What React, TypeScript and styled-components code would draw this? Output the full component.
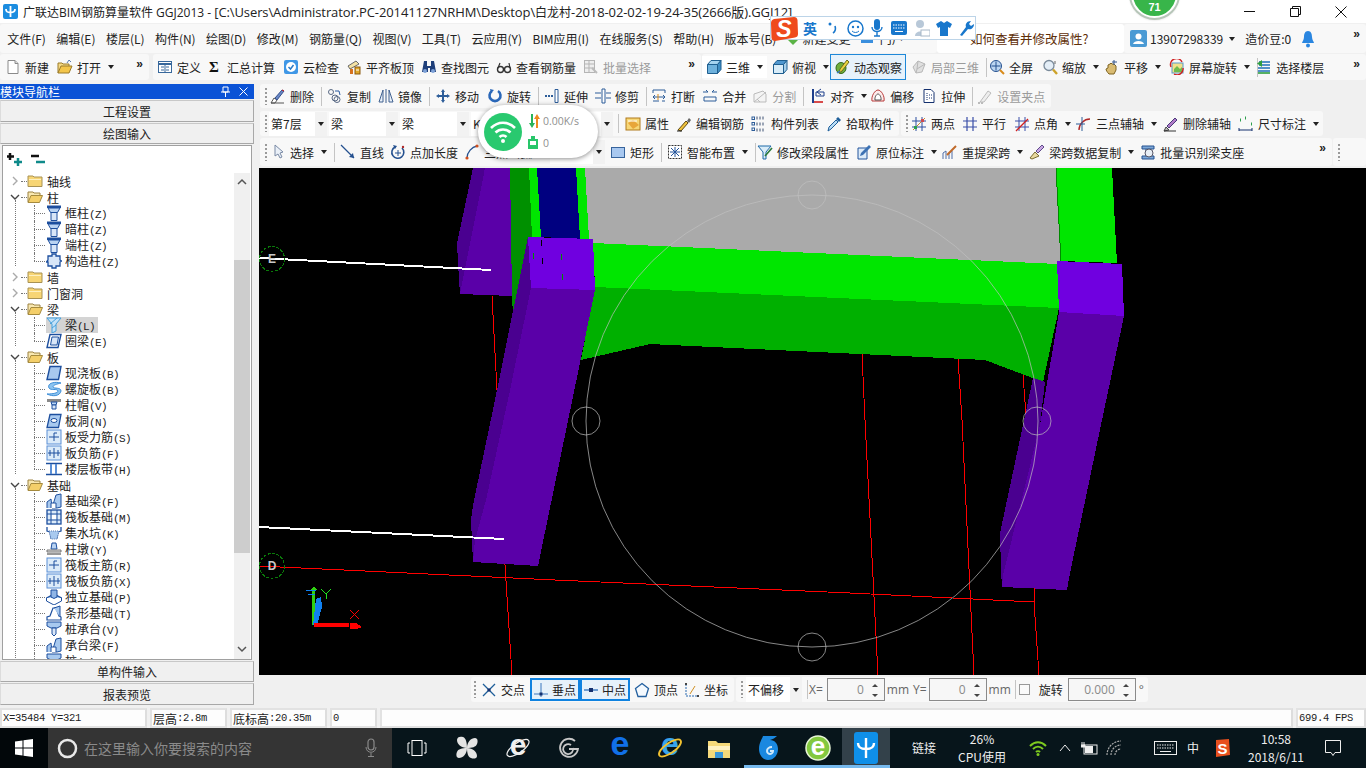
import React from 'react';
import styled, { createGlobalStyle } from 'styled-components';

const Global = createGlobalStyle`
  html, body { margin: 0; padding: 0; overflow: hidden; background: #f0f0f0; }
  body { font-family: "Noto Sans CJK SC", "Liberation Sans", sans-serif; font-size: 12px; color: #222; }
  * { box-sizing: border-box; }
`;

const UI = '"Open Sans", "Noto Sans CJK SC", sans-serif';
const MONO = '"Liberation Mono", "Noto Sans CJK SC", monospace';

/* ---------- page frame ---------- */
const Page = styled.div`
  width: 1366px; height: 768px; position: relative; overflow: hidden;
  display: flex; flex-direction: column; background: #f0f0f0;
`;
const TitleBar = styled.div`
  height: 23px; flex: none; background: #fff; display: flex; align-items: center;
  padding-left: 3px; font-family: ${UI}; font-size: 12px; color: #222; white-space: nowrap;
`;
const TitleText = styled.span` margin-left: 5px; letter-spacing: 0; `;
const TitleWide = styled.span` font-size: 13px; letter-spacing: -0.1px; `;
const WinCtrls = styled.div` margin-left: auto; display: flex; align-items: center; padding-right: 2px; `;
const WinBtn = styled.div`
  width: 46px; height: 22px; display: flex; align-items: center; justify-content: center;
`;
const Row = styled.div<{ $h: number; $pl?: number }>`
  height: ${p => p.$h}px; flex: none; display: flex; align-items: stretch; gap: 0;
  padding-left: ${p => p.$pl ?? 0}px; overflow: hidden; white-space: nowrap;
`;
const Bar = styled.div<{ $w?: number; $ml?: number; $my?: number; $white?: boolean }>`
  ${p => (p.$w ? `width:${p.$w}px;flex:none;` : 'flex:1;min-width:0;')}
  margin-left: ${p => p.$ml ?? 0}px;
  margin-top: ${p => p.$my ?? 0}px; margin-bottom: ${p => p.$my ?? 0}px;
  display: flex; align-items: center; background: ${p => (p.$white ? '#fff' : '#f8f8f8')};
  border-radius: 3px; position: relative;
`;
const Grip = styled.i`
  flex: none; width: 2px; height: 17px; margin: 0 1px 0 5px;
  background: repeating-linear-gradient(to bottom, #9a9a9a 0 2px, transparent 2px 4px);
`;
const More = styled.span`
  margin-left: auto; align-self: flex-start; padding: 3px 6px 0; font: bold 12px "Liberation Sans", sans-serif; color: #222;
`;
const Sep = styled.i`
  flex: none; width: 1px; height: 19px; margin: 0 2px 0 3px; background: #c4c4c4;
`;
const Tool = styled.div<{ $off?: boolean; $caret?: boolean; $ml?: number; $hl?: boolean; $snap?: boolean; $wb?: boolean }>`
  flex: none; display: inline-flex; align-items: center; gap: 4px; height: 100%;
  padding: 0 ${p => (p.$caret ? 1 : 4)}px 0 4px; margin-left: ${p => p.$ml ?? 0}px;
  color: ${p => (p.$off ? '#9b9b9b' : '#222')};
  ${p => p.$wb ? 'background:#fff;height:22px;' : ''}
  ${p => p.$hl ? 'height:26px;border:1px solid #1e88d8;background:#e7f2fb;padding:0 3px;' : ''}
  ${p => p.$snap ? 'height:23px;border:2px solid #0f82e0;background:#e6f1fa;padding:0 2px 0 1px;gap:3px;' : ''}
`;
const CaretBox = styled.span`
  flex: none; width: 12px; height: 100%; display: flex; align-items: center; justify-content: center;
  &::before { content: ''; border: 3px solid transparent; border-top: 4px solid #222; border-bottom: 0; }
`;
const SelectBox = styled.div<{ $w: number; $ml?: number }>`
  flex: none; width: ${p => p.$w}px; height: 24px; margin-left: ${p => p.$ml ?? 0}px; background: #fff;
  display: flex; align-items: center; padding-left: 2px; font-size: 12px; color: #222;
`;
const SelectArrow = styled.span`
  margin-left: auto; width: 12px; height: 100%; background: #f2f2f2; display: flex; align-items: center; justify-content: center;
  &::before { content: ''; border: 3px solid transparent; border-top: 4px solid #222; border-bottom: 0; }
`;

/* ---------- body ---------- */
const Body = styled.div` flex: 1; min-height: 0; display: flex; `;
const Side = styled.aside` width: 254px; flex: none; display: flex; flex-direction: column; `;
const SideHead = styled.div`
  height: 15px; flex: none; margin-bottom: 1px; background: #0a52d6; color: #fff; display: flex; align-items: center;
  font-size: 12px; line-height: 15px;
`;
const SideHeadIcons = styled.div` margin-left: auto; display: flex; gap: 9px; padding-right: 6px; align-items: center; `;
const SideBtn = styled.div<{ $h: number }>`
  height: ${p => p.$h}px; flex: none; margin-bottom: 1px; border: 1px solid #a8a8a8; border-top-color: #c8c8c8; border-left-color: #dcdcdc;
  background: #f0f0f0; display: flex; align-items: center; justify-content: center; font-size: 12px; color: #222;
`;
const Panel = styled.div`
  height: 515px; flex: none; margin: 0 2px 1px 2px; border: 1px solid #a0a0a0; background: #fff;
  display: flex; flex-direction: column;
`;
const PanelTools = styled.div` height: 27px; flex: none; padding: 4px 0 0 4px; `;
const TreeWrap = styled.div` flex: 1; min-height: 0; display: flex; `;
const TreeList = styled.div` flex: 1; min-width: 0; overflow: hidden; `;
const Group = styled.div` position: relative; `;
const GroupKids = styled.div`
  position: relative;
  &::before { content: ''; position: absolute; left: 12px; top: -5px; bottom: 3px; border-left: 1px dotted #777; }
`;
const GroupRow = styled.div`
  height: 16px; display: flex; align-items: center; padding-left: 7px; position: relative; font-size: 12px; color: #222;
`;
const Chevron = styled.svg` width: 10px; height: 10px; flex: none; `;
const Dots = styled.i` width: 6px; flex: none; height: 0; margin: 0 0 0 1px; border-top: 1px dotted #777; `;
const KidRow = styled.div<{ $last?: boolean }>`
  height: 16px; display: flex; align-items: center; padding-left: 43px; position: relative; font-size: 12px; color: #222;
  &::before { content: ''; position: absolute; left: 31px; top: 8px; width: 11px; border-top: 1px dotted #777; }
  &::after { content: ''; position: absolute; left: 31px; top: 0; height: ${p => (p.$last ? 8 : 16)}px; border-left: 1px dotted #777; }
`;
const KidLabel = styled.span<{ $sel?: boolean }>`
  height: 16px; line-height: 16px; padding: 0 3px 0 3px; background: ${p => (p.$sel ? '#d4d4d4' : 'transparent')};
`;
const KidIcon = styled.span<{ $sel?: boolean }>`
  width: 16px; height: 16px; flex: none; display: block; background: ${p => (p.$sel ? '#d4d4d4' : 'transparent')};
`;
const Lat = styled.span` font-family: ${MONO}; font-size: 11px; letter-spacing: -0.6px; `;
const Track = styled.div`
  width: 16px; flex: none; background: #f0f0f0; display: flex; flex-direction: column; margin-right: 1px;
`;
const TrackEnd = styled.div` height: 17px; flex: none; display: flex; align-items: center; justify-content: center; `;
const TrackGap = styled.div<{ $h: number }>` height: ${p => p.$h}px; flex: none; `;
const Thumb = styled.div` height: 293px; flex: none; background: #cdcdcd; `;

const Main = styled.main` flex: 1; min-width: 0; display: flex; flex-direction: column; `;
const Canvas = styled.div`
  height: 507px; flex: none; margin-left: 5px; background: #000; overflow: hidden;
  svg { display: block; }
`;
const Field = styled.div<{ $w: number }>`
  width: ${p => p.$w}px; height: 23px; flex: none; border: 1px solid #8a8a8a; background: #f7f7f7; position: relative;
  display: flex; align-items: center; justify-content: flex-end; padding-right: 20px; color: #8a8a8a; font-family: ${UI};
`;
const Spin = styled.i`
  position: absolute; right: 6px; top: 5px; width: 6px; height: 13px;
  &::before { content: ''; position: absolute; top: 0; left: 0; border: 3px solid transparent; border-bottom: 3px solid #444; border-top: 0; }
  &::after { content: ''; position: absolute; bottom: 0; left: 0; border: 3px solid transparent; border-top: 3px solid #444; border-bottom: 0; }
`;
const Unit = styled.span<{ $ml?: number }>` margin-left: ${p => p.$ml ?? 2}px; color: #666; font-family: ${UI}; font-size: 12px; `;
const Check = styled.i` width: 11px; height: 11px; flex: none; margin-left: 4px; border: 1px solid #999; background: #fafafa; `;

const Status = styled.div` height: 23px; flex: none; display: flex; padding-top: 3px; gap: 3px; `;
const Cell = styled.div<{ $w?: number }>`
  ${p => (p.$w ? `width:${p.$w}px;flex:none;` : 'flex:1;')}
  height: 20px; border: 2px solid #e2e2e2; border-right-color: #ddd; background: #fdfdfd; display: flex; align-items: center; padding-left: 1px;
  font-family: ${MONO}; font-size: 10.5px; letter-spacing: -0.3px; color: #222; overflow: hidden; white-space: nowrap;
`;
const CellCjk = styled.span` font-family: "Noto Sans CJK SC", sans-serif; font-size: 12px; letter-spacing: 0; `;

/* ---------- taskbar ---------- */
const Taskbar = styled.footer` height: 40px; flex: none; background: #07151b; display: flex; align-items: stretch; color: #eee; `;
const Start = styled.div` width: 48px; flex: none; background: #02070a; display: flex; align-items: center; justify-content: center; `;
const Search = styled.div`
  width: 344px; flex: none; background: #343434; display: flex; align-items: center; padding-left: 9px; color: #8a8a8a; font-size: 14px; white-space: nowrap;
`;
const SearchText = styled.span` margin-left: 6px; `;
const SearchMic = styled.span` margin-left: auto; margin-right: 15px; display: flex; `;
const TaskItem = styled.div<{ $w: number; $on?: boolean; $line?: boolean }>`
  width: ${p => p.$w}px; flex: none; display: flex; align-items: center; justify-content: center; position: relative;
  background: ${p => (p.$on ? '#33414a' : 'transparent')};
  ${p => p.$line ? `box-shadow: inset 0 -3px 0 #76b9ed;` : ''}
`;
const TrayText = styled.div`
  display: flex; flex-direction: column; align-items: center; justify-content: center; font-size: 12px; line-height: 18px; color: #eee; white-space: nowrap;
`;
const Clock = styled(TrayText)` font-size: 12px; line-height: 18px; position: relative; `;

/* ---------- overlays ---------- */
const ImeBar = styled.div`
  position: absolute; left: 770px; top: 16px; width: 206px; height: 24px; background: #fff; border: 1px solid #bcd4e8;
  display: flex; align-items: center; z-index: 5; color: #1877cc;
`;
const ImeLogo = styled.div`
  position: absolute; left: -1px; top: 0; width: 28px; height: 24px;
`;
const ImeSlot = styled.span<{ $w: number; $ml?: number }>`
  width: ${p => p.$w}px; margin-left: ${p => p.$ml ?? 0}px; flex: none; display: flex; align-items: center; justify-content: center; font-weight: 700; font-size: 14px;
`;
const NetWidget = styled.div`
  position: absolute; left: 478px; top: 105px; width: 120px; height: 53px; border-radius: 27px; background: #fff;
  box-shadow: 0 1px 5px rgba(0,0,0,.45); display: flex; align-items: center; padding-left: 6px; z-index: 4;
  color: #8f8f8f; font-family: ${UI}; font-size: 10.5px;
`;
const NetBall = styled.div`
  width: 38px; height: 38px; border-radius: 50%; background: #29c96f; flex: none; display: flex; align-items: center; justify-content: center;
`;
const NetInfo = styled.div` margin-left: 6px; display: grid; grid-template-columns: 14px auto; row-gap: 8px; align-items: center; column-gap: 1px; `;
const Ball = styled.div`
  position: absolute; left: 1131px; top: -29px; width: 47px; height: 47px; border-radius: 50%; background: #38b54a; border: 2px solid #fff;
  box-shadow: 0 0 0 2px #b7c6b9, 0 1px 3px rgba(0,0,0,.4); z-index: 6; color: #fff; font: bold 11px "Liberation Sans", sans-serif;
  display: flex; align-items: flex-end; justify-content: center; padding-bottom: 3px;
`;
const Hint = styled.span` color: #5e2e08; font-size: 12.5px; font-family: "Noto Sans CJK SC", sans-serif; padding-left: 33px; `;

/* ---------- icons ---------- */
const D = '#1d4f9e', L = '#b9d3f2', M = '#5b8fd6', R = '#d02020', K = '#333', N = '#14306e';
const A: Record<string, React.ReactNode> = {
  new: <><path d="M3 1.5h7l3 3v10H3z" fill="#fff" stroke="#8a8a8a" /><path d="M10 1.5v3h3" fill="#ddd" stroke="#8a8a8a" /></>,
  open: <><path d="M1 14V4h4l1 1h6v2" fill="#f6da85" stroke="#9a7a2a" /><path d="M1 14l3-7h11l-3 7z" fill="#f3c54a" stroke="#9a7a2a" /><path d="M10 4l2-3 2 2" fill="none" stroke="#5a7ab0" /></>,
  define: <><rect x="1.5" y="2.5" width="13" height="11" fill="#fff" stroke="#38689c" /><path d="M2 5h12" stroke="#38689c" strokeWidth="2" /><path d="M4 8h3M4 11h3M9 8h3M9 11h3M8 6v7" stroke="#38689c" /></>,
  sigma: <text x="2" y="13" fontFamily="Liberation Serif" fontWeight="700" fontSize="15" fill="#111">Σ</text>,
  cloud: <><rect x="1" y="1" width="14" height="14" rx="2" fill="#3f97e6" /><circle cx="8" cy="8" r="5" fill="#fff" /><path d="M5.5 8l2 2 3-4" fill="none" stroke="#2b7bc8" strokeWidth="1.5" /></>,
  level: <><path d="M2 7l8-5 3 3-9 5z" fill="#f4e2a4" stroke="#6a6a6a" /><rect x="4" y="10" width="3" height="5" fill="#d8721e" /><rect x="9" y="8" width="5" height="7" fill="#e0a82a" stroke="#8a5a10" /><path d="M10 11h3" stroke="#fff" /></>,
  find: <><path d="M3 2h3v5h4V2h3l2 11H9V9H7v4H1z" fill="#1f3f7a" /><circle cx="4" cy="12" r="2" fill="#7ea2d8" /><circle cx="12" cy="12" r="2" fill="#7ea2d8" /></>,
  glasses: <><circle cx="4.5" cy="10.5" r="3" fill="none" stroke={K} strokeWidth="1.4" /><circle cx="11.5" cy="10.5" r="3" fill="none" stroke={K} strokeWidth="1.4" /><path d="M7.5 10h1M2 9l2-5M14 9l-1-5" stroke={K} strokeWidth="1.2" /></>,
  batch: <><rect x="1.5" y="1.5" width="10" height="12" fill="#eee" stroke="#b5b5b5" /><path d="M1.5 5h10M1.5 9h10M6 1.5v12" stroke="#b5b5b5" /><path d="M9 9l5 5" stroke="#bbb" strokeWidth="2" /></>,
  cube: <><path d="M1.5 5.5h10v9h-10z" fill="#6fb2dd" stroke="#1f5f90" /><path d="M1.5 5.5L5 1.5h10l-3.5 4z" fill="#a5d3ef" stroke="#1f5f90" /><path d="M11.5 5.5L15 1.5v9l-3.5 4z" fill="#3f8ec4" stroke="#1f5f90" /></>,
  top: <><path d="M1.5 5.5h10v9h-10z" fill="#d8ecf8" stroke="#1f5f90" /><path d="M1.5 5.5L5 1.5h10l-3.5 4z" fill="#4f97cf" stroke="#1f5f90" /><path d="M11.5 5.5L15 1.5v9l-3.5 4z" fill="#a8d0ea" stroke="#1f5f90" /></>,
  orbit: <><ellipse cx="7" cy="9" rx="5" ry="5.5" fill="#6fae3c" stroke="#35691a" /><path d="M13 1L6 10l-1 4 3-2 7-9z" fill="#e9d23e" stroke="#6d6a1a" /><path d="M3 14l3-2" stroke="#3a7fc8" strokeWidth="1.5" /></>,
  local: <><path d="M2 8l5-6 7 3-3 8-6 1z" fill="#e0e0e0" stroke="#b8b8b8" /><path d="M7 2l-1 8 8-5M6 10l-1 4" stroke="#b8b8b8" fill="none" /></>,
  full: <><circle cx="7" cy="7" r="5.5" fill="#bcd6f2" stroke="#24508f" /><path d="M7 2.5v9M2.5 7h9" stroke="#24508f" /><path d="M11 11l4 4" stroke="#d88a1a" strokeWidth="2" /></>,
  zoom: <><circle cx="7" cy="6.5" r="5" fill="#e4eef7" stroke="#7a8a9a" strokeWidth="1.3" /><path d="M11 10.5l4 4.5" stroke="#cda32a" strokeWidth="2.4" /><path d="M13 2v3" stroke="#666" /></>,
  pan: <><path d="M5 15c-2-2-3-4-3-5l2-1V6l2-1 1-1 1 1h2l2 2v4l-2 4z" fill="#d9bb72" stroke="#7f6422" /><path d="M10 1v5M8 3h5" stroke="#33558c" /></>,
  srot: <><rect x="3" y="4" width="11" height="10" fill="#f1e08a" stroke="#5a9ac8" /><path d="M5 10l3-3 3 3 2-2v5H5z" fill="#6fbb4e" /><path d="M2 8a6 6 0 0 1 11-5M14 9a6 6 0 0 1-9 6" fill="none" stroke={R} strokeWidth="1.4" /></>,
  floor: <><path d="M3 3h11M3 6h11M2 9h12M2 12h12" stroke="#1f6fb8" strokeWidth="1.6" /><path d="M6 1L1 4.5 6 8z" fill="#2f9f3f" /><path d="M2 14h12" stroke="#2f9f3f" strokeWidth="1.6" /></>,
  del: <><path d="M1 15l3-5 3 2-2 3z" fill="#fff" stroke="#555" /><path d="M5 10l7-8 2 1-7 9z" fill="#6a88c6" stroke="#34508c" /><path d="M1 15h13" stroke="#555" /><path d="M12 2l2 1" stroke={R} /></>,
  copy: <><circle cx="4" cy="4" r="2.5" fill="none" stroke="#5a6a85" /><circle cx="10" cy="11.5" r="3" fill="none" stroke="#5a6a85" /><circle cx="8" cy="10" r="3" fill="none" stroke="#5a6a85" /><path d="M8 3l4 0 1 4" fill="none" stroke="#2a5aa0" /></>,
  mirror: <><path d="M1 14L5 2v12z" fill="#eaf1fa" stroke="#40618f" /><path d="M15 14L11 2v12z" fill="#eaf1fa" stroke="#40618f" /><path d="M8 1v14" stroke="#40618f" /></>,
  move: <path d="M8 1l2 3H9v3h3V6l3 2-3 2V9H9v3h1l-2 3-2-3h1V9H4v1L1 8l3-2v1h3V4H6z" fill="#2d5d99" />,
  rot: <><path d="M11 3a5.5 5.5 0 1 1-6 0" fill="none" stroke="#2a67b8" strokeWidth="2.6" /><path d="M3 1l4 1-3 3z" fill="#2a67b8" /></>,
  extend: <><path d="M1 8h8M1 8" stroke="#2d5d99" strokeDasharray="2 1" strokeWidth="2" /><path d="M11 1.5v13h3v-13z" fill="#fff" stroke="#2d5d99" /></>,
  trim: <><path d="M7 1h3v14H7z" fill="#fff" stroke="#2d5d99" /><path d="M0 5h6M0 10h6M11 5h5M11 10h5" stroke="#2d5d99" strokeWidth="1.2" /></>,
  brk: <><path d="M2 2h12M2 13h6M11 13h3M2 2v3M14 2v3" stroke="#2d5d99" fill="none" /><path d="M4 7l-2 2 2 2M12 7l2 2-2 2M2 9h12" stroke="#2d5d99" fill="none" /><path d="M7 6v6" stroke="#d88a1a" /></>,
  merge: <><path d="M2 13h12M2 9h12M2 9v4M14 9v4" fill="none" stroke="#2d5d99" /><path d="M1 4h5l-2-2M15 4h-5l2-2" fill="none" stroke="#2d5d99" /></>,
  split: <><path d="M2 14V6l9-3 3 3v8z" fill="#f4f4f4" stroke="#bbb" /><path d="M2 14L14 4M5 11l3 3" stroke="#bbb" /></>,
  align: <><path d="M3 1v14" stroke="#1d3f8c" strokeWidth="2" /><path d="M4 14h9" stroke={R} strokeWidth="1.6" /><path d="M6 4h8v4H6zM11 1l-4 3 4 3" fill="none" stroke="#1d3f8c" /></>,
  offset: <><path d="M2 13c-1-5 3-11 6-11s7 6 6 11z" fill="#fdeaea" stroke="#b83a3a" /><path d="M5 12c-.5-3 1.5-6 3-6s3.5 3 3 6z" fill="#fff" stroke="#555" /></>,
  stretch: <><path d="M3 1.5h7l3 3v10H3z" fill="#fff" stroke={N} /><path d="M8 7h3M8 10h3M6 5v7" stroke={N} strokeDasharray="1 1" /></>,
  gripp: <><path d="M3 14L11 3l3 2-7 9z" fill="#eee" stroke="#bbb" /><path d="M1 15h5" stroke="#bbb" strokeWidth="2" strokeDasharray="2 1" /></>,
  prop: <><rect x="1" y="2" width="14" height="12" fill="#f7d777" stroke="#b07a1c" /><path d="M3 7l5-3 6 5-6 4z" fill="#e8a63a" /><path d="M3 5h9" stroke="#fff" /></>,
  rebar: <><path d="M2 14L10 5l2 2-7 8z" fill="#f0c23c" stroke="#5f4a12" /><path d="M11 5l2-3 2 2-2 3z" fill="#666" /><path d="M1 15h5" stroke="#222" /></>,
  list: <><path d="M5 2h9M5 8h9M5 14h9" stroke="#9aa4b5" strokeWidth="3" strokeDasharray="2 1" /><rect x="1" y="1" width="2.5" height="2.5" fill="none" stroke="#2d5d99" /><rect x="1" y="6.5" width="2.5" height="2.5" fill="none" stroke="#2d5d99" /><rect x="1" y="12" width="2.5" height="2.5" fill="none" stroke="#2d5d99" /></>,
  pick: <><path d="M2 15l1-4 7-7 2 2-7 7z" fill="#b9dcf5" stroke="#1f5f9a" /><path d="M10 3l2-2 3 3-2 2z" fill="#1f5f9a" /></>,
  twop: <><path d="M5 1v14M11 1v14M1 5h14M1 11h14" stroke="#2d4fa0" /><path d="M2 14L14 2" stroke="#ca8a28" /><rect x="3" y="10" width="3" height="3" fill="#2c9f4c" /><rect x="10" y="3" width="3" height="3" fill="#d24a4a" /></>,
  para: <path d="M5 1v14M11 1v14M1 5h14M1 11h14" stroke="#3a4fa8" strokeWidth="1.2" />,
  angle: <><path d="M5 1v14M11 1v14M1 5h14M1 11h14" stroke="#3a4fa8" /><path d="M2 15L14 3" stroke={R} strokeWidth="1.3" /></>,
  arc3: <><path d="M3 14c0-6 5-11 11-11" fill="none" stroke="#b02828" strokeWidth="1.4" /><path d="M0 8h9M6 1v14" stroke="#2d5d99" /></>,
  delax: <><path d="M1 15l2-4 3 3z" fill="#bdbdbd" stroke="#444" /><path d="M4 10l8-8 2 2-8 8z" fill="#b07ac8" stroke="#4a3a7a" /><path d="M1 15h12" stroke={K} /></>,
  dim: <><path d="M1 12v3M14 12v3M1 14h13" stroke="#14306e" /><path d="M2 4h1M7 2h1M13 8h1" stroke="#2c9f4c" strokeWidth="3" /></>,
  arrow: <path d="M5 1l0 11 3-2 2 4 2-1-2-4 3-1z" fill="#eaf0f8" stroke="#7a8aa5" />,
  line: <><path d="M1 1l13 13" stroke="#24508f" strokeWidth="1.3" /><path d="M14 14l-5-1 4-4z" fill="#24508f" /></>,
  addlen: <><path d="M5 3a6 6 0 1 0 7 1" fill="none" stroke="#24508f" strokeWidth="1.6" /><path d="M8 6v6M5 9h6" stroke="#24508f" /><path d="M3 1l4 1-2 3z" fill="#24508f" /><circle cx="13" cy="3" r="1.2" fill="#b02828" /></>,
  arcT: <><path d="M3 14C3 8 8 3 13 2" fill="none" stroke="#24508f" strokeWidth="1.3" /><circle cx="3" cy="14" r="1.6" fill="#d2501e" /><circle cx="13" cy="2" r="1.6" fill="#d2501e" /></>,
  rect: <rect x="1.5" y="3.5" width="13" height="10" fill="#a8c8f0" stroke="#36639c" />,
  smart: <><rect x="1.5" y="1.5" width="13" height="13" fill="#fff" stroke="#333" strokeDasharray="2 1" /><path d="M8 3v10M3 8h10M4 4l8 8M12 4l-8 8" stroke="#23549c" strokeWidth="1" /></>,
  modseg: <><path d="M1 2h13l-5 6v7H6V8z" fill="#d9ecf8" stroke="#1f6aa8" /><path d="M8 12L15 4" stroke="#2a7a3c" strokeWidth="1.6" /></>,
  orig: <><path d="M2 4h9v11H2z" fill="#dcebf9" stroke="#23549c" /><path d="M5 9l8-8 2 2-8 8-3 1z" fill="#3d72b4" /></>,
  relift: <><path d="M1 15V9l3-2v8M7 15V9l3-2v8" fill="none" stroke="#4f6fa8" /><path d="M5 11l9-9" stroke="#c06a2a" strokeWidth="2" /></>,
  spancp: <><path d="M1 14l5-6 4 4-7 3z" fill="#e8d9a0" stroke="#7a6a30" /><path d="M7 7l6-6 2 2-6 6z" fill="#c9a7e3" stroke="#5f4a8a" /></>,
  batchid: <><path d="M2 2h12v3H2zM2 12h12v3H2z" fill="#7da8d8" stroke="#24508f" /><path d="M6 5v7M10 5v7" stroke="#24508f" /><circle cx="9" cy="9" r="4" fill="#e8eef5" stroke="#556" /></>,
  inter: <><path d="M2 2l12 12M14 2L2 14" stroke="#1f5f9a" strokeWidth="1.3" /><rect x="6.5" y="6.5" width="3" height="3" fill="#14306e" /></>,
  perp: <><path d="M8 1v14M1 12h14" stroke="#3a77bd" /><rect x="6.5" y="10.5" width="3" height="3" fill="#14306e" /></>,
  mid: <><path d="M1 8h14" stroke="#3a77bd" strokeWidth="1.4" /><rect x="6" y="6" width="4" height="4" fill="#14306e" /></>,
  vertex: <path d="M8 1.5l6.5 5-2.5 8H4l-2.5-8z" fill="#f4f9fe" stroke="#24609f" strokeWidth="1.3" />,
  coord: <><path d="M2 2v12h12" stroke="#2b6ab0" strokeDasharray="2 1" fill="none" /><path d="M6 12L11 4" stroke="#d09022" /><rect x="1" y="1" width="2" height="2" fill="#444" /><rect x="13" y="13" width="2" height="2" fill="#444" /></>,
  /* tree */
  col: <><path d="M1 .5h14V3H1z" fill={D} /><path d="M2 3h12l-2.5 4.5h-7z" fill={L} stroke={D} /><path d="M5 7.5h6v8H5z" fill="#d8e6f8" stroke={D} /></>,
  gz: <path d="M6 1h4v2h4v4l1.5 1L14 9v4h-4v2H6v-2H2V9H.5L2 7V3h4z" fill="#d8e6f8" stroke={D} strokeWidth="1.3" />,
  beam: <><path d="M1 1h14l-5 6v7l-4 2V7z" fill="#c4e2f8" stroke="#45a0dc" /><path d="M4 7l7-6M6 11l4-3" stroke="#45a0dc" /></>,
  ring: <><path d="M4 1.5h11L12 14.5H1z" fill="#fff" stroke={D} strokeWidth="1.4" /><path d="M6 4h6.5L11 12H4.5z" fill="#d8e6f8" stroke={D} /></>,
  slab: <path d="M4 1.5h11L12.5 14.5H1z" fill="#a8c9ef" stroke={D} strokeWidth="1.4" />,
  spiral: <path d="M15 2C7 0 1 3 3 7c2 3 8 0 9 3 0 2-5 3-11 3 6 3 13 2 14-3 0-4-7-2-8-4 0-2 4-3 8-4z" fill="#8cc4f0" stroke="#3f8fd8" />,
  cap: <><path d="M1 2h14v3H1z" fill="#8a8a8a" /><path d="M5 5h6l-1 3H6z" fill={L} stroke={D} /><path d="M6 8h4v4H6z" fill="#d8e6f8" stroke={D} /></>,
  hole: <><path d="M4 1.5h11L12.5 14.5H1z" fill="#a8c9ef" stroke={D} strokeWidth="1.3" /><ellipse cx="8" cy="7.5" rx="3" ry="2" fill="#fff" stroke={D} /></>,
  sq: <><rect x="1" y="1" width="14" height="14" fill="#dcebf9" stroke={M} /><path d="M8 4v8M3 8h10" stroke={D} /><path d="M8 4h3" stroke={D} /></>,
  sqn: <><rect x="1" y="1" width="14" height="14" fill="#dcebf9" stroke={M} /><path d="M8 3v10M2 8h12M4 5v6M12 5v6" stroke={D} /></>,
  band: <><path d="M0 2.5h16M0 13.5h16" stroke={D} strokeWidth="1.6" /><path d="M5 3v10M10 3v10" stroke={M} strokeWidth="2" /></>,
  fbeam: <><path d="M1 15V9l4-3 1 9M6 15l4-13 5-1v13l-4 1z" fill="#a8c9ef" stroke={D} /><path d="M5 15V10h5v5" fill="#fff" stroke={D} /></>,
  raft: <><rect x="1" y="1" width="14" height="14" fill="#dcebf9" stroke={D} strokeWidth="1.3" /><path d="M5 1v14M11 1v14M1 5h14M1 11h14" stroke={D} /><rect x="6" y="6" width="4" height="4" fill="#fff" /></>,
  pit: <><path d="M1 2v4l3 1 1 6h6l1-6 3-1V2" fill="none" stroke={D} strokeWidth="1.3" /><path d="M3 6h10l-2 8H5z" fill="#a8c9ef" strokeDasharray="1 1" stroke="#5a7ab0" /></>,
  pier: <><path d="M6 2h4l1 6H5z" fill={L} stroke={D} /><path d="M1 9h14v2H1z" fill="#e0e0e0" stroke="#777" /><path d="M1 13h14" stroke="#777" strokeWidth="1.5" /></>,
  indep: <><path d="M.5 9L8 5l7.5 4L8 14z" fill="#a8c9ef" stroke={D} strokeWidth="1.2" /><path d="M.5 9v3L8 16l7.5-4V9" fill="#fff" stroke={D} /><path d="M5 8V1h6v7l-3 1.5z" fill="#8fb5e6" stroke={D} /></>,
  strip: <><path d="M1 15v-3l3-1 3-8h3l3 8 2 1v3z" fill="#fff" stroke={D} strokeWidth="1.2" /><path d="M8 3l6-2v11" fill="#a8c9ef" stroke={D} /></>,
  pile: <><path d="M1 1h14v4L11 7H5L1 5z" fill="#a8c9ef" stroke={D} /><path d="M6 7h4v6l-2 2-2-2z" fill="#d8e6f8" stroke={D} /></>,
};
const I = ({ n, s = 16 }: { n: string; s?: number }) => (
  <svg width={s} height={s} viewBox="0 0 16 16" style={{ flex: 'none', display: 'block' }}>{A[n]}</svg>
);

type T = { i?: string; t?: string; c?: boolean; off?: boolean; hl?: boolean; sep?: boolean; ml?: number; snap?: boolean; wb?: boolean };
const Tools = ({ list }: { list: T[] }) => (
  <>
    {list.map((x, k) =>
      x.sep ? <Sep key={k} /> : (
        <Tool key={k} $off={x.off} $caret={x.c} $ml={x.ml} $hl={x.hl} $snap={x.snap} $wb={x.wb}>
          <I n={x.i!} />
          <span>{x.t}</span>
          {x.c && <CaretBox />}
        </Tool>
      ),
    )}
  </>
);
const Select = ({ w, t, ml }: { w: number; t?: string; ml?: number }) => (
  <SelectBox $w={w} $ml={ml}><span>{t}</span><SelectArrow /></SelectBox>
);

const menu = ['文件(F)', '编辑(E)', '楼层(L)', '构件(N)', '绘图(D)', '修改(M)', '钢筋量(Q)', '视图(V)', '工具(T)', '云应用(Y)', 'BIM应用(I)', '在线服务(S)', '帮助(H)', '版本号(B)'];
const MenuItem = styled.span` padding: 0 5.2px; font-size: 12px; `;
const IconBox = styled.span<{ $ml?: number }>` margin-left: ${p => p.$ml ?? 0}px; display: flex; align-items: center; `;
const BarText = styled.span<{ $ml?: number }>` margin-left: ${p => p.$ml ?? 0}px; `;

const tree: { n: string; open?: boolean; kids?: [string, string, string, boolean?][] }[] = [
  { n: '轴线' },
  { n: '柱', open: true, kids: [['col', '框柱', '(Z)'], ['col', '暗柱', '(Z)'], ['col', '端柱', '(Z)'], ['gz', '构造柱', '(Z)']] },
  { n: '墙' },
  { n: '门窗洞' },
  { n: '梁', open: true, kids: [['beam', '梁', '(L)', true], ['ring', '圈梁', '(E)']] },
  { n: '板', open: true, kids: [['slab', '现浇板', '(B)'], ['spiral', '螺旋板', '(B)'], ['cap', '柱帽', '(V)'], ['hole', '板洞', '(N)'], ['sq', '板受力筋', '(S)'], ['sqn', '板负筋', '(F)'], ['band', '楼层板带', '(H)']] },
  { n: '基础', open: true, kids: [['fbeam', '基础梁', '(F)'], ['raft', '筏板基础', '(M)'], ['pit', '集水坑', '(K)'], ['pier', '柱墩', '(Y)'], ['sq', '筏板主筋', '(R)'], ['sqn', '筏板负筋', '(X)'], ['indep', '独立基础', '(P)'], ['strip', '条形基础', '(T)'], ['pile', '桩承台', '(V)'], ['fbeam', '承台梁', '(F)'], ['pile', '桩', '(U)']] },
];

const Folder = ({ open }: { open?: boolean }) => (
  <svg width="16" height="14" viewBox="0 0 16 14" style={{ flex: 'none', margin: '0 4px 0 0' }}>
    {open
      ? <><path d="M1 12V2h5l1 1h6v3" fill="#f8e7b0" stroke="#9c8342" /><path d="M1 12.5l3-7h11.5l-3 7z" fill="#f4cf6a" stroke="#a58a3e" /></>
      : <><path d="M1 3V2h5l1 1h8v9.5H1z" fill="#f7d574" stroke="#a89254" /><path d="M2 5h12v1H2z" fill="#fdf0c0" /></>}
  </svg>
);

const Tree = () => (
  <TreeList>
    {tree.map(g => (
      <Group key={g.n}>
        <GroupRow>
          <Chevron viewBox="0 0 10 10">
            {g.open ? <path d="M1 3l4 4 4-4" fill="none" stroke="#444" strokeWidth="1.4" /> : <path d="M3 1l4 4-4 4" fill="none" stroke="#aaa" strokeWidth="1.4" />}
          </Chevron>
          <Dots />
          <Folder open={g.open} />
          <span>{g.n}</span>
        </GroupRow>
        {g.kids && (
          <GroupKids>
            {g.kids.map((k, i) => (
              <KidRow key={k[1]} $last={i === g.kids!.length - 1}>
                <KidIcon $sel={k[3]}><I n={k[0]} /></KidIcon>
                <KidLabel $sel={k[3]}>{k[1]}<Lat>{k[2]}</Lat></KidLabel>
              </KidRow>
            ))}
          </GroupKids>
        )}
      </Group>
    ))}
  </TreeList>
);

/* ---------- 3D viewport ---------- */
const P1 = '#5a00a8', P2 = '#7000e0', P3 = '#4a0090', GB = '#00e600', GD = '#00b000', GS = '#009000';
const Poly = ({ f, p }: { f: string; p: string }) => <polygon fill={f} points={p} />;
const Ln = ({ p, c = '#f00', w = 1 }: { p: string; c?: string; w?: number }) => <polyline fill="none" stroke={c} strokeWidth={w} points={p} />;
const AxisTag = ({ x, y, t }: { x: number; y: number; t: string }) => (
  <g>
    <circle cx={x} cy={y} r="12.5" fill="none" stroke="#0a7a0a" strokeDasharray="3 1.5" />
    <text x={x} y={y + 4} textAnchor="middle" fontFamily="Liberation Sans" fontWeight="700" fontSize="12" fill="#c8c8c8">{t}</text>
  </g>
);
const Viewport = () => (
  <svg width="1107" height="507" viewBox="259 168 1107 507" shapeRendering="crispEdges">
    <Ln p="492,296 497,390 505,565 512,675" />
    <Ln p="862,354 865,420 878,675" />
    <Ln p="958,358 962,420 974,675" />
    <Ln p="1023,375 1026,415" />
    <Ln p="1034,588 1034,602 1039,675" />
    <Ln p="259,566 555,580 850,593 1034,602" />
    <Poly f={P1} p="485,168 510,168 512,296 460,294" />
    <Poly f={P3} p="473,168 485,168 460,294 459,280 457,243" />
    <Poly f={GS} p="510,168 529,168 533,237 513,315 512,296" />
    <Poly f={GB} p="529,168 537,168 541,237 532,237" />
    <Poly f="#000080" p="537,168 577,168 580,239 541,237" />
    <Poly f={GB} p="576,168 585,168 589,239 580,239" />
    <Poly f="#aaaaaa" p="585,168 1056,168 1061,261 1058,264 593,243 589,239" />
    <Poly f={GB} p="1056,168 1112,168 1117,263 1061,261" />
    <Ln p="1056,168 1061,261" c="#008a00" />
    <Poly f={GD} p="595,287 1059,308 1043,382 985,360 650,344 581,360" />
    <Poly f={GB} p="593,243 1058,264 1059,308 595,287" />
    <Poly f={P3} p="1033,378 1045,382 1040,425 1003,575 1002,587 1001,570 1000,533" />
    <Poly f={P1} p="1059,312 1124,316 1102,420 1070,573 1067,590 1002,587 1003,575 1040,425" />
    <Poly f={P2} p="1057,261 1122,264 1124,316 1059,312" />
    <Poly f={P3} p="528,237 531,288 509,395 486,500 475,540 473,562 471,520 473,505 496,395" />
    <Poly f={P1} p="531,288 595,290 538,566 473,562 475,540 486,500 509,395" />
    <Poly f={P2} p="528,237 593,239 595,290 531,288" />
    <Ln p="541,240 541,246" c="#000" />
    <Ln p="542,258 542,264" c="#000" />
    <Ln p="533,253 533,259" c={GS} />
    <Ln p="561,254 561,260" c={GS} />
    <Ln p="562,274 562,280" c={GS} />
    <Ln p="259,258 491,270" c="#fff" w={2} />
    <Ln p="259,527 504,539" c="#fff" w={2} />
    <g shapeRendering="auto" fill="none" stroke="#c0c0c0" strokeWidth="0.7">
      <circle cx="812" cy="421" r="226" />
      <circle cx="812" cy="195" r="14" />
      <circle cx="586" cy="421" r="14" />
      <circle cx="1037" cy="421" r="14" />
      <circle cx="812" cy="647" r="14" />
    </g>
    <AxisTag x={272} y={259} t="E" />
    <AxisTag x={272} y={566} t="D" />
    <path d="M312 590h3v35h-3z" fill="#30d010" />
    <path d="M311 590l3-4 3 4z" fill="#30d010" />
    <path d="M313 625l3-26 5-2 1 10-5 18z" fill="#1080f0" />
    <path d="M306 590h10M308 594h7" stroke="#1080f0" />
    <path d="M314 623h35v4h-35zM350 623h6l6 4-6 2h-6z" fill="#f00" />
    <path d="M321 589l5 5 5-5M326 594v5" fill="none" stroke="#20e020" />
    <path d="M350 610l9 9M359 610l-9 9" stroke="#f00" />
  </svg>
);

/* ---------- taskbar pictures ---------- */
const SvgText = ({ c, s = 28, t = 'e' }: { c: string; s?: number; t?: string }) => (
  <text x="14" y="21" textAnchor="middle" fontFamily="Liberation Sans" fontWeight={700} fontSize={s} fill={c}>{t}</text>
);
const Sq = ({ children }: { children: React.ReactNode }) => <svg width="28" height="28" viewBox="0 0 28 28" style={{ display: 'block' }}>{children}</svg>;

const App: React.FC = () => (
  <Page>
    <Global />
    <TitleBar>
      <svg width="15" height="15" viewBox="0 0 15 15"><rect width="15" height="15" rx="2" fill="#1c8de0" /><path d="M7.5 2v11M3 5c0 3 1.5 3.5 4.5 3.5S12 8 12 5" fill="none" stroke="#fff" strokeWidth="1.8" /></svg>
      <TitleText>
        广联达BIM钢筋算量软件 GGJ2013 - <TitleWide>{'[C:\\Users\\Administrator.PC-20141127NRHM\\Desktop\\'}</TitleWide>白龙村<TitleWide>-2018-02-02-19-24-35(2666版).GGJ12]</TitleWide>
      </TitleText>
      <WinCtrls>
        <WinBtn><svg width="11" height="11" viewBox="0 0 11 11"><path d="M0 5.5h11" stroke="#111" /></svg></WinBtn>
        <WinBtn><svg width="11" height="11" viewBox="0 0 11 11"><path d="M.5 2.5h8v8h-8zM2.5 2.5v-2h8v8h-2" fill="none" stroke="#111" /></svg></WinBtn>
        <WinBtn><svg width="12" height="12" viewBox="0 0 12 12"><path d="M.5.5l11 11M11.5.5l-11 11" stroke="#111" /></svg></WinBtn>
      </WinCtrls>
    </TitleBar>

    <Row $h={31}>
      <Bar $w={937} $my={1} style={{ paddingLeft: 2 }}>
        {menu.map(m => <MenuItem key={m}>{m}</MenuItem>)}
        <IconBox $ml={3}><svg width="16" height="16" viewBox="0 0 16 16"><path d="M2 8l6-5 6 5-6 6z" fill="#5bb346" /></svg></IconBox>
        <BarText $ml={2}>新建变更</BarText>
        <IconBox $ml={8}><svg width="16" height="16" viewBox="0 0 16 16"><path d="M2 3h12v9H2z" fill="#3a8fde" /></svg></IconBox>
        <BarText $ml={5}>门户</BarText>
      </Bar>
      <Bar $w={187} $my={1} $white><Hint>如何查看并修改属性?</Hint></Bar>
      <Bar $my={1}>
        <IconBox $ml={6}><svg width="17" height="17" viewBox="0 0 17 17"><rect width="17" height="17" rx="2" fill="#4a9ad4" /><circle cx="8.5" cy="6.5" r="3" fill="#fff" /><path d="M3 14c1-4 10-4 11 0z" fill="#fff" /></svg></IconBox>
        <BarText $ml={3}>13907298339</BarText>
        <CaretBox style={{ marginLeft: 3, width: 12 }} />
        <BarText $ml={7}>造价豆:0</BarText>
        <IconBox $ml={10}><svg width="14" height="18" viewBox="0 0 14 18"><path d="M7 1c-3 0-4 3-4 6 0 3-2 5-2 6h12c0-1-2-3-2-6 0-3-1-6-4-6z" fill="#2a86e0" /><circle cx="7" cy="15.5" r="2" fill="#2a86e0" /></svg></IconBox>
        <More>»</More>
      </Bar>
    </Row>

    <Row $h={30}>
      <Bar $w={149} style={{ marginBottom: 4, paddingLeft: 1 }}>
        <Tools list={[{ i: 'new', t: '新建' }, { i: 'open', t: '打开', c: true, ml: 0 }]} />
        <More>»</More>
      </Bar>
      <Bar $w={548} $ml={4} style={{ marginBottom: 4 }}>
        <Tools list={[
          { i: 'define', t: '定义' }, { i: 'sigma', t: '汇总计算', ml: -2 }, { i: 'cloud', t: '云检查', ml: 0 },
          { i: 'level', t: '平齐板顶', ml: -1 }, { i: 'find', t: '查找图元', ml: -1 }, { i: 'glasses', t: '查看钢筋量', ml: -1 }, { i: 'batch', t: '批量选择', off: true, ml: -1 },
        ]} />
        <More>»</More>
      </Bar>
      <Bar $ml={1} style={{ marginBottom: 4 }}>
        <Tools list={[
          { i: 'cube', t: '三维', c: true, wb: true }, { i: 'top', t: '俯视', c: true, ml: 1 }, { i: 'orbit', t: '动态观察', hl: true, ml: -3 },
          { i: 'local', t: '局部三维', off: true, ml: 1 }, { sep: true }, { i: 'full', t: '全屏', ml: -4 }, { i: 'zoom', t: '缩放', c: true, ml: 1 },
          { i: 'pan', t: '平移', c: true, ml: -3 }, { i: 'srot', t: '屏幕旋转', c: true }, { sep: true }, { i: 'floor', t: '选择楼层', ml: -8 },
        ]} />
        <More>»</More>
      </Bar>
    </Row>

    <Body>
      <Side>
        <SideHead>
          模块导航栏
          <SideHeadIcons>
            <svg width="9" height="11" viewBox="0 0 9 11"><path d="M2 1h5v5H2zM0 6h9M4.5 6v5" fill="none" stroke="#fff" /></svg>
            <svg width="9" height="9" viewBox="0 0 9 9"><path d="M.5.5l8 8M8.5.5l-8 8" stroke="#fff" /></svg>
          </SideHeadIcons>
        </SideHead>
        <SideBtn $h={22}>工程设置</SideBtn>
        <SideBtn $h={21}>绘图输入</SideBtn>
        <Panel>
          <PanelTools>
            <svg width="42" height="18" viewBox="0 0 42 18">
              <path d="M3 3v7M0 6.5h7" stroke="#111" strokeWidth="2.5" /><path d="M11 8v8M7 12h8" stroke="#0f8a8a" strokeWidth="2.5" />
              <path d="M24 6h8" stroke="#111" strokeWidth="2.5" /><path d="M29 12h9" stroke="#0f8a8a" strokeWidth="2.5" />
            </svg>
          </PanelTools>
          <TreeWrap>
            <Tree />
            <Track>
              <TrackEnd><svg width="10" height="8" viewBox="0 0 10 8"><path d="M1 6l4-4 4 4" fill="none" stroke="#555" strokeWidth="1.5" /></svg></TrackEnd>
              <TrackGap $h={70} />
              <Thumb />
              <TrackGap $h={87} />
              <TrackEnd><svg width="10" height="8" viewBox="0 0 10 8"><path d="M1 2l4 4 4-4" fill="none" stroke="#555" strokeWidth="1.5" /></svg></TrackEnd>
            </Track>
          </TreeWrap>
        </Panel>
        <SideBtn $h={21}>单构件输入</SideBtn>
        <SideBtn $h={22}>报表预览</SideBtn>
      </Side>

      <Main>
        <Row $h={26} $pl={6}>
          <Bar $w={791} style={{ marginBottom: 2 }}>
            <Grip />
            <Tools list={[
              { i: 'del', t: '删除', ml: -2 }, { sep: true }, { i: 'copy', t: '复制', ml: -1 }, { i: 'mirror', t: '镜像', ml: -1 }, { sep: true }, { i: 'move', t: '移动', ml: -1 }, { i: 'rot', t: '旋转' }, { sep: true },
              { i: 'extend', t: '延伸', ml: -1 }, { i: 'trim', t: '修剪', ml: -1 }, { sep: true }, { i: 'brk', t: '打断', ml: -2 }, { i: 'merge', t: '合并', ml: -1 }, { i: 'split', t: '分割', off: true, ml: -2 }, { sep: true },
              { i: 'align', t: '对齐', c: true }, { i: 'offset', t: '偏移', ml: -5 }, { i: 'stretch', t: '拉伸', ml: -1 }, { sep: true }, { i: 'gripp', t: '设置夹点', off: true, ml: -2 },
            ]} />
          </Bar>
        </Row>
        <Row $h={28} $pl={6}>
          <Bar $w={639} style={{ marginTop: 1, marginBottom: 2 }}>
            <Grip />
            <Select w={58} t="第7层" ml={1} />
            <Select w={69} t="梁" ml={2} />
            <Select w={69} t="梁" ml={2} />
            <Select w={142} t="K" ml={2} />
            <Sep style={{ marginLeft: 5 }} />
            <Tools list={[{ i: 'prop', t: '属性' }, { i: 'rebar', t: '编辑钢筋', ml: -1 }, { i: 'list', t: '构件列表', ml: -1 }, { i: 'pick', t: '拾取构件', ml: -1 }]} />
          </Bar>
          <Bar $w={422} $ml={2} style={{ marginTop: 1, marginBottom: 2 }}>
            <Grip />
            <Tools list={[
              { i: 'twop', t: '两点', ml: -2 }, { i: 'para', t: '平行', ml: -1 }, { i: 'angle', t: '点角', c: true },
              { i: 'arc3', t: '三点辅轴', c: true, ml: -3 }, { i: 'delax', t: '删除辅轴', ml: -2 }, { i: 'dim', t: '尺寸标注', c: true, ml: -1 },
            ]} />
          </Bar>
        </Row>
        <Row $h={30} $pl={6}>
          <Bar $w={1072} style={{ marginBottom: 2 }}>
            <Grip />
            <Tools list={[
              { i: 'arrow', t: '选择', c: true, ml: -2 }, { sep: true }, { i: 'line', t: '直线', ml: -1 }, { i: 'addlen', t: '点加长度', ml: -2 }, { i: 'arcT', t: '三点画弧', ml: -2 },
            ]} />
            <Select w={55} ml={14} />
            <Tools list={[
              { i: 'rect', t: '矩形', ml: 1 }, { sep: true }, { i: 'smart', t: '智能布置', c: true, ml: -1 }, { sep: true }, { i: 'modseg', t: '修改梁段属性', ml: -5 }, { i: 'orig', t: '原位标注', c: true, ml: -1 },
              { i: 'relift', t: '重提梁跨', c: true, ml: -3 }, { i: 'spancp', t: '梁跨数据复制', c: true, ml: -2 }, { i: 'batchid', t: '批量识别梁支座', ml: -2 },
            ]} />
            <More>»</More>
          </Bar>
          <Bar $ml={1} style={{ marginBottom: 2 }}><Grip /></Bar>
        </Row>

        <Canvas><Viewport /></Canvas>

        <Row $h={30} $pl={217}>
          <Bar $w={263} style={{ marginTop: 2, marginBottom: 3 }}>
            <Grip style={{ marginLeft: 3 }} />
            <Tools list={[{ i: 'inter', t: '交点' }, { i: 'perp', t: '垂点', snap: true, ml: 1 }, { i: 'mid', t: '中点', snap: true }, { i: 'vertex', t: '顶点' }, { i: 'coord', t: '坐标', ml: -2 }]} />
          </Bar>
          <Bar $w={412} $ml={2} style={{ marginTop: 2, marginBottom: 3 }}>
            <Grip />
            <SelectBox $w={56} $ml={2} style={{ height: 25 }}><span>不偏移</span><SelectArrow /></SelectBox>
            <Sep style={{ marginLeft: 5, marginRight: 1 }} />
            <Unit $ml={0}>X=</Unit>
            <Field $w={58} style={{ marginLeft: 4 }}>0<Spin /></Field>
            <Unit>mm</Unit>
            <Unit $ml={4}>Y=</Unit>
            <Field $w={58} style={{ marginLeft: 2 }}>0<Spin /></Field>
            <Unit>mm</Unit>
            <Sep style={{ marginLeft: 4, marginRight: 0 }} />
            <Check style={{ marginLeft: 3 }} />
            <BarText $ml={9}>旋转</BarText>
            <Field $w={68} style={{ marginLeft: 5 }}>0.000<Spin /></Field>
            <Unit $ml={3}>°</Unit>
          </Bar>
        </Row>
      </Main>
    </Body>

    <Status>
      <Cell $w={147}>X=35484 Y=321</Cell>
      <Cell $w={77}><CellCjk>层高</CellCjk>:2.8m</Cell>
      <Cell $w={97}><CellCjk>底标高</CellCjk>:20.35m</Cell>
      <Cell $w={47}>0</Cell>
      <Cell />
      <Cell $w={70}>699.4 FPS</Cell>
    </Status>

    <Taskbar>
      <Start><svg width="18" height="18" viewBox="0 0 18 18"><path d="M0 2.5l7.500-1v7H0zM8.500 1.300L18 0v8.500H8.500zM0 9.500h7.500v7L0 15.500zM8.500 9.500H18V18l-9.500-1.300z" fill="#fff" /></svg></Start>
      <Search>
        <svg width="21" height="21" viewBox="0 0 21 21"><circle cx="10.5" cy="10.5" r="8.5" fill="none" stroke="#e8e8e8" strokeWidth="2.5" /></svg>
        <SearchText>在这里输入你要搜索的内容</SearchText>
        <SearchMic><svg width="12" height="20" viewBox="0 0 12 20"><rect x="3" y="1" width="6" height="11" rx="3" fill="none" stroke="#8a8a8a" strokeWidth="1.2" /><path d="M1 9c0 7 10 7 10 0M6 15v3M3 18.5h6" fill="none" stroke="#8a8a8a" /></svg></SearchMic>
      </Search>
      <TaskItem $w={49}><svg width="20" height="16" viewBox="0 0 20 16"><rect x="5" y=".5" width="10" height="15" fill="none" stroke="#fff" /><path d="M3 3H1v10h2M17 3h2v10h-2" fill="none" stroke="#fff" /></svg></TaskItem>
      <TaskItem $w={51}><Sq><path d="M14 14C8 14 4 10 4 6c0-3 3-4 6-3 3 1 4 6 4 11zM14 14c0-6 4-10 8-10 3 0 3 4 2 6-1 3-5 4-10 4zM14 14c6 0 10 4 10 8 0 3-4 3-6 2-3-1-4-5-4-10zM14 14c0 6-4 10-8 10-3 0-3-4-2-6 1-3 5-4 10-4z" fill="#e4e4e4" /></Sq></TaskItem>
      <TaskItem $w={51}><Sq><SvgText c="#f0f0f0" s={30} /><ellipse cx="14" cy="14" rx="13" ry="5" transform="rotate(-35 14 14)" fill="none" stroke="#f0f0f0" strokeWidth="1.2" /></Sq></TaskItem>
      <TaskItem $w={51}><Sq><path d="M20 7a9 9 0 1 0 3 8H14m2-4a5 5 0 1 0 2 3" fill="none" stroke="#c8c8c8" strokeWidth="1.8" /></Sq></TaskItem>
      <TaskItem $w={51}><Sq><SvgText c="#1170e8" s={34} /></Sq></TaskItem>
      <TaskItem $w={49}><Sq><SvgText c="#39a4ec" s={32} /><ellipse cx="14" cy="14" rx="13" ry="5" transform="rotate(-35 14 14)" fill="none" stroke="#f2c230" strokeWidth="1.8" /></Sq></TaskItem>
      <TaskItem $w={50}><Sq><path d="M3 7h8l2 2h12v15H3z" fill="#f5d97a" /><path d="M3 12h22v4H3z" fill="#fff2c2" /><path d="M10 18h8v6h-8z" fill="#3a96d8" /></Sq></TaskItem>
      <TaskItem $w={49} $line><Sq><path d="M8 2h14c-2 2-4 3-7 4 5 0 8 4 8 9 0 6-4 11-10 11C8 26 4 21 4 15 4 9 7 5 8 2z" fill="#1a88e0" /><path d="M17 13c-3 0-5 2-5 4s2 3 3 3 3-1 3-3h-3" fill="none" stroke="#cfe8fa" strokeWidth="2" /></Sq></TaskItem>
      <TaskItem $w={49} $line><Sq><circle cx="14" cy="14" r="12" fill="#83c83f" /><circle cx="14" cy="14" r="12" fill="none" stroke="#e8f5d8" strokeWidth="1.5" /><SvgText c="#fff" s={26} /></Sq></TaskItem>
      <TaskItem $w={48} $on $line><svg width="24" height="32" viewBox="0 0 24 32"><rect width="24" height="32" rx="3" fill="#0f8fe8" /><path d="M12 6v20M4 11c0 5 3 6 8 6s8-1 8-6" fill="none" stroke="#fff" strokeWidth="2.4" /></svg></TaskItem>
      <TaskItem $w={68}><TrayText>链接</TrayText></TaskItem>
      <TaskItem $w={48}><TrayText><span>26%</span><span>CPU使用</span></TrayText></TaskItem>
      <TaskItem $w={18} />
      <TaskItem $w={28}><svg width="18" height="16" viewBox="0 0 18 16"><path d="M1 6c5-5 11-5 16 0M4 9c3-3 7-3 10 0M7 12c1-1 3-1 4 0" fill="none" stroke="#7ecb20" strokeWidth="2" /><circle cx="9" cy="14.5" r="1.5" fill="#7ecb20" /></svg></TaskItem>
      <TaskItem $w={26}><svg width="12" height="8" viewBox="0 0 12 8"><path d="M1 7l5-6 5 6" fill="none" stroke="#eee" /></svg></TaskItem>
      <TaskItem $w={24}><svg width="18" height="14" viewBox="0 0 18 14"><rect x="3" y="4" width="13" height="9" fill="none" stroke="#eee" /><rect x="4" y="5" width="8" height="7" fill="#eee" /><path d="M1 1v3M3 1v3M0 4h4v2H0z" fill="#eee" stroke="#eee" /></svg></TaskItem>
      <TaskItem $w={24}><svg width="16" height="16" viewBox="0 0 16 16"><path d="M1 15a14 14 0 0 1 14-14M5 15A10 10 0 0 1 15 5M9 15a6 6 0 0 1 6-6" fill="none" stroke="#aaa" strokeWidth="1.2" strokeDasharray="2 1" /></svg></TaskItem>
      <TaskItem $w={24} />
      <TaskItem $w={30}><svg width="23" height="14" viewBox="0 0 23 14"><rect x=".5" y=".5" width="22" height="13" fill="none" stroke="#eee" /><path d="M3 4h17M3 7h17" stroke="#eee" strokeDasharray="1.5 1" /><path d="M6 10.5h11" stroke="#eee" /></svg></TaskItem>
      <TaskItem $w={26}><TrayText>中</TrayText></TaskItem>
      <TaskItem $w={32}><svg width="16" height="18" viewBox="0 0 16 18"><path d="M2 1l13-1 1 16-14 2z" fill="#e8501e" /><text x="8.5" y="14.5" textAnchor="middle" fontFamily="Liberation Sans" fontWeight="700" fontSize="15" fill="#fff">S</text></svg></TaskItem>
      <TaskItem $w={76}><Clock><span>10:58</span><span>2018/6/11</span></Clock></TaskItem>
      <TaskItem $w={38}><svg width="16" height="17" viewBox="0 0 16 17"><path d="M.5.5h15v12H10l-2 3-2-3H.5z" fill="none" stroke="#eee" /></svg></TaskItem>
    </Taskbar>

    <ImeBar>
      <ImeLogo><svg width="28" height="24" viewBox="0 0 28 24"><path d="M4 2l20-2q3 0 3.5 3l.5 14q0 3-3 3.5L5 24q-3 0-3.500-3L1 6q0-3 3-4z" fill="#ef4a1c" /><text x="14" y="20" textAnchor="middle" fontFamily="Liberation Sans" fontWeight="700" fontStyle="italic" fontSize="23" fill="#fff">S</text></svg></ImeLogo>
      <ImeSlot $w={24} $ml={27}>英</ImeSlot>
      <ImeSlot $w={22}><svg width="10" height="14" viewBox="0 0 10 14"><circle cx="2" cy="3" r="1.5" fill="#1877cc" /><path d="M7 5c1 3 1 5-2 7" fill="none" stroke="#1877cc" strokeWidth="1.6" /></svg></ImeSlot>
      <ImeSlot $w={22}><svg width="17" height="17" viewBox="0 0 17 17"><circle cx="8.5" cy="8.5" r="7.5" fill="none" stroke="#1877cc" strokeWidth="1.5" /><circle cx="6" cy="7" r="1.2" fill="#1877cc" /><circle cx="11" cy="7" r="1.2" fill="#1877cc" /><path d="M5 11c2 2 5 2 7 0" fill="none" stroke="#1877cc" /></svg></ImeSlot>
      <ImeSlot $w={22}><svg width="12" height="18" viewBox="0 0 12 18"><rect x="3" y="0" width="6" height="11" rx="3" fill="#1877cc" /><path d="M1 8c0 6 10 6 10 0M6 13v4M3 17h6" fill="none" stroke="#1877cc" strokeWidth="1.4" /></svg></ImeSlot>
      <ImeSlot $w={22}><svg width="16" height="14" viewBox="0 0 16 14"><rect width="16" height="14" rx="2" fill="#1877cc" /><path d="M2 4h12M2 7h12" stroke="#fff" strokeDasharray="1.5 1" /><path d="M4 10.5h8" stroke="#fff" /></svg></ImeSlot>
      <ImeSlot $w={23}><svg width="16" height="18" viewBox="0 0 16 18"><circle cx="6" cy="5" r="4" fill="#b8c8d8" /><path d="M1 17c0-6 10-6 10 0z" fill="#b8c8d8" /><rect x="7" y="11" width="9" height="6" fill="#fff" stroke="#a8b8c8" /></svg></ImeSlot>
      <ImeSlot $w={22}><svg width="16" height="15" viewBox="0 0 16 15"><path d="M5 0l3 2 3-2 5 3-2 4-2-1v9H4V6L2 7 0 3z" fill="#1877cc" /></svg></ImeSlot>
      <ImeSlot $w={22}><svg width="15" height="15" viewBox="0 0 15 15"><path d="M1 14L7 6C6 3 8 0 12 0l-2 3 2 2 3-2c0 4-3 6-6 5l-6 7z" fill="#1877cc" /></svg></ImeSlot>
    </ImeBar>

    <NetWidget>
      <NetBall><svg width="28" height="24" viewBox="0 0 28 24"><path d="M2 8c7-7 17-7 24 0M6.5 12.5c4-4 11-4 15 0M10.5 17c2-2 5-2 7 0" fill="none" stroke="#fff" strokeWidth="2.6" /><circle cx="14" cy="21" r="2" fill="#fff" /></svg></NetBall>
      <NetInfo>
        <svg width="12" height="14" viewBox="0 0 12 14"><path d="M3 0h2v9h2L4 14 1 9h2z" fill="#27b35a" /><path d="M8 14h2V5h2L9 0 6 5h2z" fill="#ee8a1f" /></svg>
        <span>0.00K/s</span>
        <svg width="10" height="13" viewBox="0 0 10 13"><rect y="3" width="10" height="10" fill="#28c66a" /><path d="M3 0h4v3H3z" fill="#28c66a" /><rect x="2" y="5" width="6" height="4" fill="#fff" /></svg>
        <span>0</span>
      </NetInfo>
    </NetWidget>

    <Ball>71</Ball>
  </Page>
);

export default App;
